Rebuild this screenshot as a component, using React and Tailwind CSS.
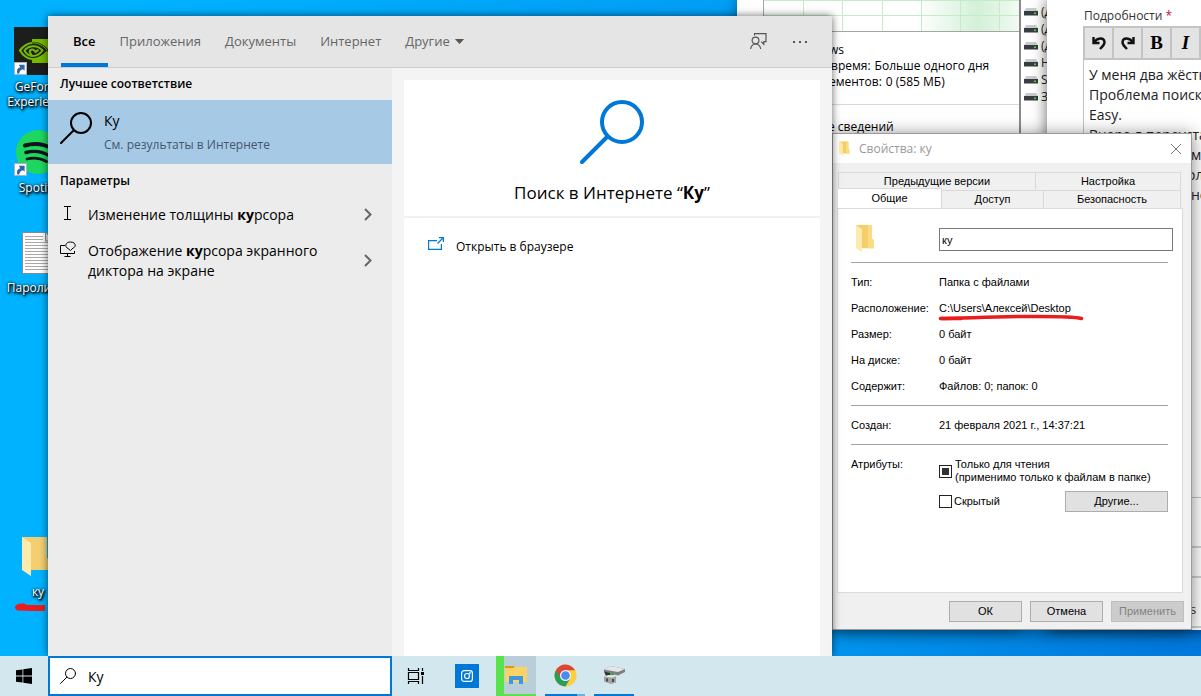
import React from "react";

const ui = "font-['Open_Sans','Noto_Sans',sans-serif]";
const dlg = "font-['Liberation_Sans',sans-serif]";

/* ---------- icons ---------- */

function Magnifier({ className, r, sw }) {
  return (
    <svg className={className} viewBox="0 0 32 32" fill="none" stroke="currentColor" strokeWidth={sw} strokeLinecap="round" aria-hidden="true">
      <circle cx="21" cy="11" r={r} />
      <path d="M13.5 18.5 1 31" />
    </svg>
  );
}

function Shortcut() {
  return (
    <svg className="absolute bottom-0 left-0 size-[13px]" viewBox="0 0 12 12" aria-hidden="true">
      <rect x=".5" y=".5" width="11" height="11" fill="#fff" stroke="#a9b4bc" strokeWidth="1" />
      <path d="M3 10.500c-.8-3 .4-5 2.800-5.600L4.400 2.500h5.400V8L8.400 6.600C6 7 5 8.400 4.900 10.500z" fill="#2f63a8" />
    </svg>
  );
}

function NvidiaIcon() {
  return (
    <svg className="size-12" viewBox="0 0 48 48" aria-hidden="true">
      <rect width="48" height="48" fill="#1c1e1c" />
      <path d="M18 12h26v24H18z" fill="#76b900" />
      <path d="M18 15c7-.5 12.500 3 17 8.500-5 6-10.500 8.500-17 8z" fill="#1c1e1c" />
      <g fill="none" stroke="#76b900">
        <path d="M18 16C12.500 16.300 9 19.500 6 23.500c3 5 7 8 12 8.500 6.500.5 11-2.500 15.500-7.500" strokeWidth="2.200" />
        <path d="M18 16c6.500-.3 11 2.500 15.500 7.500" strokeWidth="1" />
        <path d="M18 19.300c-3.500.4-5.800 2-7.500 4.200 1.500 3 4 5 7.500 5.500 4.500.3 8-2 10.500-5.500-2.500-3-6-4.800-10.500-4.200" strokeWidth="2" />
        <path d="M18 28c-2.500-1.500-3.500-5 0-5.500 2-.2 2.500 1.200 3.500 2.500 1-1 2-1.500 3-2" strokeWidth="2" />
      </g>
    </svg>
  );
}

function SpotifyIcon() {
  return (
    <svg className="size-12" viewBox="0 0 48 48" aria-hidden="true">
      <circle cx="24" cy="24" r="22" fill="#1ed760" />
      <g fill="none" stroke="#10131a" strokeLinecap="round">
        <path d="M11 17.500c9-2.500 19-1.500 27 3" strokeWidth="4" />
        <path d="M12 24.500c8-2.200 16-1 23 3" strokeWidth="3.400" />
        <path d="M13 31c7-1.800 13.500-1 19.500 2.500" strokeWidth="2.800" />
      </g>
    </svg>
  );
}

function TextFileIcon() {
  return (
    <svg className="h-[42px] w-8" viewBox="0 0 32 42" aria-hidden="true">
      <path d="M.5.500H23l8.500 8.500v32.500H.5z" fill="#fdfdfd" stroke="#8a8a8a" />
      <path d="M23.500.500V9h8" fill="#e6e6e6" stroke="#8a8a8a" />
      <path d="M3 4.500h18M3 7.500h18M3 10.500h26M3 13.500h26M3 16.500h26M3 19.500h26M3 22.500h26M3 25.500h26M3 28.500h26M3 31.500h26M3 34.500h26M3 37.500h26" stroke="#a8a8a8" />
    </svg>
  );
}

/* large folder as drawn on the desktop */
function DesktopFolderIcon() {
  return (
    <svg className="h-[42px] w-8" viewBox="0 0 32 42" aria-hidden="true">
      <path d="M0 1h25v21l4 2v10H0z" fill="#f3cf72" />
      <path d="M0 1l9 6v33l-9-6z" fill="#ffeaae" />
    </svg>
  );
}

function FolderIcon({ className }) {
  return (
    <svg className={className} viewBox="0 0 20 30" preserveAspectRatio="none" aria-hidden="true">
      <path d="M1 1h16v14l2 2v8H1z" fill="#f3cf69" />
      <path d="M1 1h16v14l2 2v8h-6V1z" fill="#fbdc82" />
      <path d="M1 1l6 4.500V29l-6-4z" fill="#ffeaae" />
    </svg>
  );
}

function DriveIcon() {
  return (
    <svg className="h-2 w-[14px] shrink-0" viewBox="0 0 14 8" aria-hidden="true">
      <path d="M2 0h10l2 3.500H0z" fill="#c9ccd0" />
      <rect y="3" width="14" height="4.500" fill="#3a3d40" />
      <rect x="10" y="4.500" width="2" height="1.500" fill="#39e639" />
    </svg>
  );
}

function ChromeIcon() {
  return (
    <svg className="size-[23px]" viewBox="0 0 48 48" aria-hidden="true">
      <circle cx="24" cy="24" r="23" fill="#ffce43" />
      <path d="M24 24 4.100 12.500A23 23 0 0 0 24 47l10-17.300z" fill="#2a9d58" />
      <path d="M24 13h19.900A23 23 0 0 0 4.100 12.500L14.500 29.500z" fill="#dc4437" />
      <circle cx="24" cy="24" r="11.500" fill="#f4f4f4" />
      <circle cx="24" cy="24" r="9" fill="#4a8af4" />
    </svg>
  );
}

/* ---------- desktop ---------- */

function DesktopIcon({ label, className, shortcut, children }) {
  return (
    <a href="#" className={"absolute left-0 flex w-[76px] flex-col items-center text-center text-[12px] leading-[15px] text-white [text-shadow:1px_1px_2px_#000,0_0_3px_#000,1px_2px_3px_#000] " + className}>
      <span className="relative flex">
        {children}
        {shortcut && <Shortcut />}
      </span>
      <span>{label}</span>
    </a>
  );
}

function TaskManager() {
  return (
    <section className="absolute top-0 left-[737px] h-[630px] w-[283px] border-r border-[#8a8a8a] bg-white text-[12px] leading-4 text-black shadow-[0_0_12px_rgba(0,0,0,0.4)]">
      <svg className="ml-[26px] h-8 w-[256px]" viewBox="0 0 256 32" aria-hidden="true">
        <defs>
          <linearGradient id="cpu">
            <stop offset="0.600" stopColor="#d3f0d7" stopOpacity="0" />
            <stop offset="0.840" stopColor="#d3f0d7" />
            <stop offset="1" stopColor="#d3f0d7" stopOpacity="0.300" />
          </linearGradient>
        </defs>
        <rect width="256" height="31" fill="url(#cpu)" />
        <path d="M0 .5h256M0 15.500h256M40.500 0v31M79.500 0v31M119.500 0v31M158.500 0v31M197.500 0v31M236.500 0v31" stroke="#c6ebca" />
        <path d="M.5 0v31.500H256" fill="none" stroke="#a5a5a5" />
      </svg>
      <div className="pt-[10px] pl-[92px]">
        <p>ws</p>
        <p className="flex gap-1 pl-0.5"><span>время:</span><span>Больше одного дня</span></p>
        <p className="flex gap-1"><span>ементов:</span><span>0 (585 МБ)</span></p>
      </div>
      <hr className="mt-[14px] border-[#d9d9d9]" />
      <p className="pt-[14px] pl-[91px]">е сведений</p>
    </section>
  );
}

function DriveList() {
  const drives = ["(Д", "(Д", "(Д", "Н", "S", "З"];
  return (
    <section className="absolute top-0 left-[1020px] h-[630px] w-[60px] border-l border-[#8a8a8a] bg-white pt-[3px] pl-[3px] text-[12px] leading-[17px] text-[#222]">
      <ul>
        {drives.map((d, i) => (
          <li key={i} className="flex items-center gap-[3px]"><DriveIcon />{d}</li>
        ))}
      </ul>
    </section>
  );
}

function Browser() {
  const tool = "flex flex-1 items-center justify-center border-r-2 border-[#c3c3c3] bg-[#e3e3e3]";
  return (
    <section className="absolute top-0 left-[1047px] h-[630px] w-[400px] bg-white pt-[7px] pl-9 shadow-[0_0_14px_rgba(0,0,0,0.6)]">
      <h2 className="pl-px text-[12px] leading-[18px] text-[#333]">Подробности <span className="text-[#b5172f]">*</span></h2>
      <div className="mt-px flex h-[34px] w-[120px] border-2 border-[#c3c3c3]">
        <button className={tool} aria-label="Отменить">
          <svg className="size-4" viewBox="0 0 16 16" fill="none" stroke="#111" strokeWidth="2.400" aria-hidden="true"><path d="M2.500 2v6h6M3 7.500C6 2.500 13 2 13.500 7c.3 3-2.500 4.500-4.500 7" /></svg>
        </button>
        <button className={tool} aria-label="Повторить">
          <svg className="size-4" viewBox="0 0 16 16" fill="none" stroke="#111" strokeWidth="2.400" aria-hidden="true"><path d="M13.500 2v6h-6M13 7.500C10 2.500 3 2 2.500 7c-.3 3 2.500 4.500 4.500 7" /></svg>
        </button>
        <button className={tool + " font-['Liberation_Serif',serif] text-[19px] font-bold"} aria-label="Полужирный">B</button>
        <button className={tool + " font-['Liberation_Serif',serif] text-[19px] font-bold italic"} aria-label="Курсив">I</button>
      </div>
      <div className="h-[438px] border-b border-l border-[#c3c3c3] pt-[5px] pl-[5px] text-[14px] leading-5 whitespace-nowrap text-[#222]">
        <p>У меня два жёстких</p>
        <p>Проблема поиска</p>
        <p>Easy.</p>
        <p>Вчера я переустан</p>
        <p className="pl-[102px]">м</p>
        <p className="pl-[98px]">ол</p>
        <p className="pl-[102px]">не</p>
      </div>
      <div className="mt-12 flex h-8 border-y-2 border-[#cfcfcf]" />
      <p className="mt-[22px] border-b-2 border-[#cfcfcf] pb-2 pl-[107px] text-[13px] leading-[18px] text-[#333]">s</p>
    </section>
  );
}

/* ---------- properties dialog ---------- */

function Row({ label, children }) {
  return (
    <div className="flex h-[26px] items-center">
      <dt className="w-[88px]">{label}</dt>
      <dd>{children}</dd>
    </div>
  );
}

function PropertiesDialog() {
  const tab = "flex h-[18px] items-center justify-center border-t border-r border-[#d9d9d9] bg-[#f0f0f0]";
  const btn = "flex h-[21px] items-center justify-center border border-[#adadad] bg-[#e1e1e1]";
  return (
    <section className={"absolute top-[133px] left-[832px] flex h-[497px] w-[360px] flex-col border border-[#9a9a9a] bg-[#f0f0f0] text-[11px] leading-[13px] text-black shadow-[0_2px_16px_rgba(0,0,0,0.5)] " + dlg}>
      <header className={"flex h-[29px] shrink-0 items-center bg-white pr-[9px] pl-1.5 text-[12px] text-[#999] " + ui}>
        <FolderIcon className="h-[15px] w-[11px]" />
        <h2 className="flex-1 pl-[9px]">Свойства: ку</h2>
        <button aria-label="Закрыть">
          <svg className="size-3" viewBox="0 0 12 12" stroke="#777" aria-hidden="true"><path d="M1 1l10 10M11 1 1 11" /></svg>
        </button>
      </header>
      <div className="flex flex-1 flex-col px-1 pt-[9px]">
        <div className="flex pr-1.5 pl-px">
          <button className={tab + " w-[198px] border-l"}>Предыдущие версии</button>
          <button className={tab + " flex-1"}>Настройка</button>
        </div>
        <div className="flex pr-1.5">
          <button className="z-10 -mt-0.5 flex h-5 w-[105px] items-center justify-center border-t border-r border-l border-[#d9d9d9] bg-white">Общие</button>
          <button className={tab + " w-[102px]"}>Доступ</button>
          <button className={tab + " flex-1"}>Безопасность</button>
        </div>
        <div className="mr-1 h-[385px] border border-[#dcdcdc] bg-white pt-[15px] pr-[14px] pl-[13px]">
          <div className="flex h-[39px] items-start border-b border-[#a0a0a0]">
            <FolderIcon className="ml-1 h-[29px] w-5" />
            <label htmlFor="folder-name" className="sr-only">Имя</label>
            <input id="folder-name" defaultValue="ку" className="mt-1 -mr-[5px] ml-16 h-[23px] w-0 flex-1 border border-[#7a7a7a] bg-white px-0.5" />
          </div>
          <dl className="border-b border-[#a0a0a0] pt-1.5 pb-[6px]">
            <Row label="Тип:">Папка с файлами</Row>
            <Row label="Расположение:">
              <span className="relative">
                C:\Users\Алексей\Desktop
                <svg className="absolute top-[11px] -left-px h-2 w-[148px]" viewBox="0 0 148 8" fill="none" stroke="#ea1c1c" strokeLinecap="round" aria-hidden="true">
                  <path d="M2.500 5.500c25 0 45-2 85-2 25 0 45-.5 56 2" strokeWidth="3.500" />
                  <path d="M3 5.500h20" strokeWidth="3.500" />
                </svg>
              </span>
            </Row>
            <Row label="Размер:">0 байт</Row>
            <Row label="На диске:">0 байт</Row>
            <Row label="Содержит:">Файлов: 0; папок: 0</Row>
          </dl>
          <dl className="border-b border-[#a0a0a0] py-1.5">
            <Row label="Создан:">21 февраля 2021 г., 14:37:21</Row>
          </dl>
          <fieldset className="flex pt-[13px]">
            <legend className="float-left w-[88px]">Атрибуты:</legend>
            <div className="flex-1">
              <label className="flex items-center gap-[3px]">
                <input type="checkbox" defaultChecked className="size-[13px] shrink-0 appearance-none border border-[#222] bg-white checked:bg-[#333] checked:shadow-[inset_0_0_0_2px_#fff]" />
                <span>Только для чтения<br />(применимо только к файлам в папке)</span>
              </label>
              <div className="flex items-center justify-between pt-[7px]">
                <label className="flex items-center gap-0.5">
                  <input type="checkbox" className="size-[13px] appearance-none border border-[#222] bg-white" />
                  Скрытый
                </label>
                <button className={btn + " w-[103px]"}>Другие...</button>
              </div>
            </div>
          </fieldset>
        </div>
        <footer className="flex justify-end gap-2 pt-2 pr-[3px]">
          <button className={btn + " w-[73px]"}>ОК</button>
          <button className={btn + " w-[73px]"}>Отмена</button>
          <button disabled className="flex h-[21px] w-[73px] items-center justify-center border border-[#bfbfbf] bg-[#cccccc] text-[#838383]">Применить</button>
        </footer>
      </div>
    </section>
  );
}

/* ---------- search panel ---------- */

function ResultRow({ icon, children }) {
  return (
    <a href="#" className="flex items-start px-3 py-2 text-[14px] leading-5 text-black">
      <span className="w-7 shrink-0">{icon}</span>
      <span className="w-[260px] shrink-0">{children}</span>
      <svg className="ml-auto w-[17px] self-center" viewBox="0 0 17 17" fill="none" stroke="#666" strokeWidth="2" aria-hidden="true"><path d="M2 2l5.500 5.500L2 13" /></svg>
    </a>
  );
}

function SearchPanel() {
  const tab = "px-3 text-[#666]";
  return (
    <main className="absolute top-4 bottom-0 left-12 flex w-[784px] flex-col bg-[#f4f4f4] shadow-[0_0_8px_rgba(0,0,0,0.6)]">
      <nav className="flex h-[52px] shrink-0 items-stretch border-b border-[#cccccc] bg-[#e5e5e5] pr-6 pl-[13px] text-[13px]">
        <button className="border-b-4 border-[#0078d7] px-3 pt-1 font-semibold text-black">Все</button>
        <button className={tab}>Приложения</button>
        <button className={tab}>Документы</button>
        <button className={tab}>Интернет</button>
        <button className={tab + " flex items-center gap-1"}>
          Другие
          <svg className="h-[5px] w-[11px]" viewBox="0 0 11 6" fill="#555" aria-hidden="true"><path d="M0 0h11L5.500 6z" /></svg>
        </button>
        <button className="ml-auto" aria-label="Отзыв">
          <svg className="size-[18px]" viewBox="0 0 18 18" fill="none" stroke="#555" strokeWidth="1.200" aria-hidden="true">
            <circle cx="5.500" cy="7.500" r="3.400" />
            <path d="M.6 16c.5-3 2.300-5 4.900-5s4.700 2 5.200 5M4.500 2.500V.6H16v8h-2.200v2.600L11.200 8.600" />
          </svg>
        </button>
        <button className="ml-6" aria-label="Параметры">
          <svg className="h-1 w-4" viewBox="0 0 16 4" fill="#555" aria-hidden="true"><path d="M1 1h2v2H1zM7 1h2v2H7zM13 1h2v2h-2z" /></svg>
        </button>
      </nav>
      <div className="flex flex-1">
        <div className="w-[344px] bg-[#ececec]">
          <h2 className="flex h-8 items-center pl-3 text-[12px] font-semibold">Лучшее соответствие</h2>
          <a href="#" className="flex h-16 items-start bg-[#a6c9e6] px-3 pt-3">
            <Magnifier className="size-8 text-black" r={10} sw={2} />
            <span className="pl-3">
              <span className="block text-[14px] leading-[18px] text-black">Ку</span>
              <span className="block pt-[7px] text-[12px] leading-4 text-[#44576a]">См. результаты в Интернете</span>
            </span>
          </a>
          <h2 className="flex h-[33px] items-center pl-3 text-[12px] font-semibold">Параметры</h2>
          <ResultRow icon={<svg className="size-4" viewBox="0 0 16 16" fill="none" stroke="#000" aria-hidden="true"><path d="M4 1.500h7M4 14.500h7M7.500 1.500v13" /></svg>}>
            Изменение толщины <b>ку</b>рсора
          </ResultRow>
          <ResultRow icon={
            <svg className="size-4" viewBox="0 0 16 16" fill="none" stroke="#000" aria-hidden="true">
              <path d="M5 4.500H.5v8h14V10M7.500 12.500v3M4.500 15.500h6" />
              <path d="M8 7.500C4.500 6 5 1 10.500 1s6 5 2.500 6l-2.500 2.500z" />
            </svg>}>
            Отображение <b>ку</b>рсора экранного диктора на экране
          </ResultRow>
        </div>
        <div className="flex flex-1 px-3 pt-3">
          <div className="flex-1 bg-white">
            <div className="flex h-[138px] flex-col items-center border-b-2 border-[#f0f0f0] pt-5">
              <Magnifier className="size-16 text-[#0078d7]" r={10} sw={2} />
              <h1 className="pt-[17px] text-[17px] leading-6 text-black">Поиск в Интернете “<b>Ку</b>”</h1>
            </div>
            <a href="#" className="flex items-start gap-3 px-6 pt-[17px] text-[12px] leading-6 text-black">
              <svg className="mt-0.5 size-4" viewBox="0 0 16 16" fill="none" stroke="#0078d7" strokeWidth="1.200" aria-hidden="true"><path d="M9 3.600H.6v8.800h12.800V7M9.500 6.500l5-5M11 .6H15.400V5" /></svg>
              Открыть в браузере
            </a>
          </div>
        </div>
      </div>
    </main>
  );
}

/* ---------- taskbar ---------- */

function Taskbar() {
  return (
    <footer className="flex h-10 shrink-0 bg-[#d3e7ef]">
      <button className="flex w-12 items-center justify-center" aria-label="Пуск">
        <svg className="size-4" viewBox="0 0 16 16" fill="#000" aria-hidden="true"><path d="M0 2.300 6.500 1.400v6.200H0zM7.300 1.300 16 0v7.600H7.300zM0 8.400h6.500v6.200L0 13.700zM7.300 8.400H16V16l-8.700-1.300z" /></svg>
      </button>
      <label className="flex w-[344px] items-center border-2 border-[#0078d7] bg-white pl-[10px]">
        <Magnifier className="size-4 shrink-0" r={10} sw={2} />
        <input aria-label="Поиск" defaultValue="Ку" className="w-0 flex-1 pl-3 text-[14px] outline-none" />
      </label>
      <button className="flex w-12 items-center justify-center" aria-label="Представление задач">
        <svg className="size-[18px]" viewBox="0 0 18 18" fill="none" stroke="#000" strokeWidth="1.200" aria-hidden="true"><path d="M1.500 1v2.500h10V1M1.500 5.500h10v7h-10zM1.500 17v-2.500h10V17M15.500 1v3M15.500 9v8" /><path d="M14 5h3v3h-3z" fill="#000" stroke="none" /></svg>
      </button>
      <button className="flex w-[54px] items-center justify-center" aria-label="Instagram">
        <span className="flex size-6 items-center justify-center bg-[#0078d7]">
          <svg className="size-3" viewBox="0 0 12 12" fill="none" stroke="#fff" strokeWidth="1.200" aria-hidden="true"><rect x=".6" y=".6" width="10.800" height="10.800" rx="2.500" /><circle cx="6" cy="6" r="2.500" /><circle cx="9" cy="3" r=".3" /></svg>
        </span>
      </button>
      <button className="ml-0.5 flex w-10 items-center border-b-2 border-l-8 border-[#58e24b] bg-[#b9ced8] pl-px" aria-label="Проводник">
        <svg className="h-5 w-[22px]" viewBox="0 0 22 20" aria-hidden="true"><path d="M0 1h9l1 3H0z" fill="#d99b16" /><path d="M0 3h9l1-1h12v15H0z" fill="#fbd267" /><path d="M4 19v-8h14v8h-4v-4H8v4z" fill="#3f98dd" /></svg>
      </button>
      <button className="ml-[9px] flex w-10 flex-col items-center" aria-label="Chrome">
        <span className="flex h-[38px] items-center"><ChromeIcon /></span>
        <span className="flex h-0.5 w-full bg-[#6cb0e8]"><span className="w-8 bg-[#0078d7]" /></span>
      </button>
      <button className="ml-[9px] flex w-10 items-center justify-center border-b-2 border-[#0078d7]" aria-label="Игра">
        <svg className="size-[22px]" viewBox="0 0 22 22" aria-hidden="true">
          <path d="M1 5.500 8 2l14 3v3l-7 3.500L1 8z" fill="#7d8080" />
          <path d="M1 5.500 8 2l14 3-7 3z" fill="#e6e6e6" />
          <path d="M1 7.500l6 1.500v3H3z" fill="#2d332e" />
          <path d="M7 9h4v2H7z" fill="#3aa84a" />
          <path d="M1 12.500 6 11l7 1.500v6L8 20l-7-2.500z" fill="#a2a3a3" />
          <path d="M1 12.500 6 11l7 1.500-5 1z" fill="#ececec" />
          <path d="M3 14.500h2v3H3zM9 15h2v3H9z" fill="#4a4c4c" />
        </svg>
      </button>
    </footer>
  );
}

export default function App() {
  return (
    <div className={"flex h-screen w-full flex-col overflow-hidden " + ui}>
      <div className="relative flex-1 overflow-hidden bg-linear-to-r from-[#00b2ff] from-10% via-[#009ef5] via-60% to-[#0078dc]">
        <DesktopIcon label="GeForce Experience" shortcut className="top-[27px] gap-1"><NvidiaIcon /></DesktopIcon>
        <DesktopIcon label="Spotify" shortcut className="top-[128px] gap-1"><SpotifyIcon /></DesktopIcon>
        <DesktopIcon label="Пароли.txt" className="top-[232px] gap-1.5"><TextFileIcon /></DesktopIcon>
        <DesktopIcon label="ку" className="top-[536px] gap-1.5"><DesktopFolderIcon /></DesktopIcon>
        <svg className="absolute top-[602px] left-[14px] h-[10px] w-8" viewBox="0 0 32 10" aria-hidden="true"><path d="M1 5C2 2 6 1 10 1.500l3 1.500h18v6H20L4 8.500C2 8 1 7 1 5z" fill="#ea1c1c" /></svg>
        <TaskManager />
        <DriveList />
        <Browser />
        <PropertiesDialog />
        <SearchPanel />
      </div>
      <Taskbar />
    </div>
  );
}
